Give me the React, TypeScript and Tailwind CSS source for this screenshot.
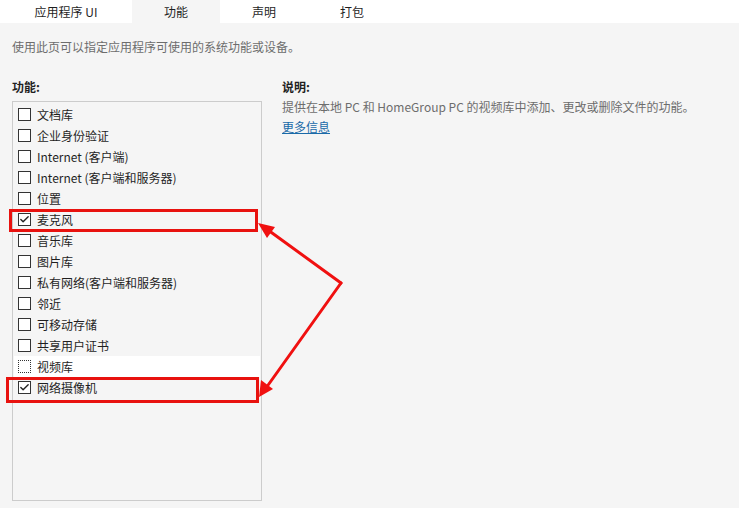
import { Check } from "lucide-react";

type Feature = {
  label: string;
  checked?: boolean;
  focused?: boolean;
};

const tabs = [
  { label: "应用程序 UI", width: "w-[132px]" },
  { label: "功能", width: "w-[88px]", active: true },
  { label: "声明", width: "w-[88px]" },
  { label: "打包", width: "w-[88px]" },
];

const features: Feature[] = [
  { label: "文档库" },
  { label: "企业身份验证" },
  { label: "Internet (客户端)" },
  { label: "Internet (客户端和服务器)" },
  { label: "位置" },
  { label: "麦克风", checked: true },
  { label: "音乐库" },
  { label: "图片库" },
  { label: "私有网络(客户端和服务器)" },
  { label: "邻近" },
  { label: "可移动存储" },
  { label: "共享用户证书" },
  { label: "视频库", focused: true },
  { label: "网络摄像机", checked: true },
];

function FeatureRow({ label, checked, focused }: Feature) {
  return (
    <div
      className={
        "flex h-[21px] items-center gap-[6px] pl-[4px] " +
        (focused ? "bg-white" : "")
      }
    >
      <span
        className={
          "flex h-[13px] w-[13px] shrink-0 items-center justify-center bg-white " +
          (focused ? "border border-dotted border-[#333]" : "border border-[#333]")
        }
      >
        {checked && <Check className="h-[11px] w-[11px] text-[#222]" strokeWidth={3} />}
      </span>
      <span className="text-[12px] leading-[21px] text-[#1f1f1f]">{label}</span>
    </div>
  );
}

export default function App() {
  return (
    <div className="relative h-[508px] w-[739px] overflow-hidden bg-[#f5f5f5] font-['Noto_Sans_CJK_SC','Noto_Sans',sans-serif]">
      <div className="flex h-[23px] bg-white">
        {tabs.map((tab) => (
          <div
            key={tab.label}
            className={
              "flex items-center justify-center text-[12px] text-[#1f1f1f] " +
              tab.width +
              (tab.active ? " bg-[#f5f5f5]" : "")
            }
          >
            {tab.label}
          </div>
        ))}
      </div>

      <p className="mt-[16px] px-3 text-[12px] leading-[16px] text-[#6d6d6d]">
        使用此页可以指定应用程序可使用的系统功能或设备。
      </p>

      <div className="mt-[22px] flex gap-[20px] px-3">
        <div className="w-[250px]">
          <p className="text-[12px] font-bold leading-[20px] text-[#1f1f1f]">功能:</p>
          <div className="mt-[4px] h-[400px] border border-[#cccccc] px-[1px] pt-[2px]">
            {features.map((f) => (
              <FeatureRow key={f.label} {...f} />
            ))}
          </div>
        </div>

        <div className="flex flex-col text-[12px] leading-[20px]">
          <p className="font-bold text-[#1f1f1f]">说明:</p>
          <p className="text-[#6d6d6d]">
            提供在本地 PC 和 HomeGroup PC 的视频库中添加、更改或删除文件的功能。
          </p>
          <a className="w-fit text-[#1a6aa8] underline" href="#">
            更多信息
          </a>
        </div>
      </div>

      {/* annotation overlays */}
      <div className="absolute left-[9px] top-[209px] h-[23px] w-[249px] border-[3px] border-[#e8120f]" />
      <div className="absolute left-[6px] top-[377px] h-[26px] w-[253px] border-[3px] border-[#e8120f]" />
      <svg className="absolute left-0 top-0" width="739" height="508" viewBox="0 0 739 508">
        <g stroke="#f01010" strokeWidth="3" fill="none" strokeLinecap="round">
          <line x1="341" y1="283" x2="268" y2="230" />
          <line x1="341" y1="283" x2="266" y2="388" />
        </g>
        <polygon points="258,223 275,227 267,238" fill="#f01010" />
        <polygon points="259,397 261,380 273,389" fill="#f01010" />
      </svg>
    </div>
  );
}
